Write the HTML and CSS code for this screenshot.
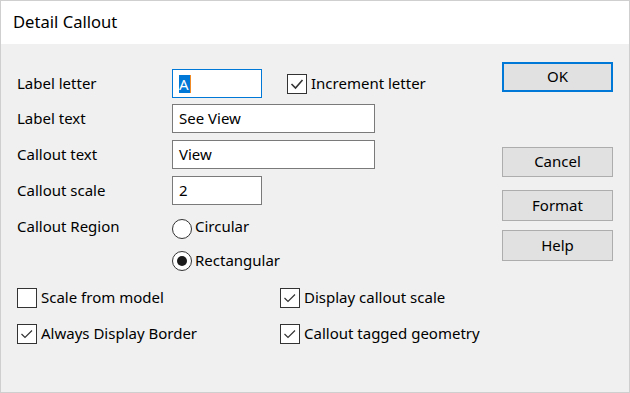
FILE: index.html
```html
<!DOCTYPE html>
<html>
<head>
<meta charset="utf-8">
<link rel="stylesheet" href="styles.css">
</head>
<body>
<div class="window">
  <div class="titlebar">Detail Callout</div>
  <div class="content">
    <div class="form">
      <div class="row r1">
        <span class="label">Label letter</span>
        <div class="input short focused"><span class="sel">A</span></div>
        <label class="check inc">
          <span class="box"><svg viewBox="0 0 18 18" width="18" height="18"><polyline points="3.5,9 7.5,13 14.5,5" /></svg></span>
          <span class="txt">Increment letter</span>
        </label>
      </div>
      <div class="row r2">
        <span class="label">Label text</span>
        <div class="input long"><span class="txt">See View</span></div>
      </div>
      <div class="row r3">
        <span class="label">Callout text</span>
        <div class="input long"><span class="txt">View</span></div>
      </div>
      <div class="row r4">
        <span class="label">Callout scale</span>
        <div class="input short"><span class="txt">2</span></div>
      </div>
      <div class="row r5">
        <span class="label up">Callout Region</span>
        <label class="radio"><span class="circle"></span><span class="txt up">Circular</span></label>
      </div>
      <div class="row r6">
        <span class="label"></span>
        <label class="radio"><span class="circle on"></span><span class="txt">Rectangular</span></label>
      </div>
      <div class="pairs">
        <label class="check small"><span class="box"></span><span class="txt">Scale from model</span></label>
        <label class="check small"><span class="box"><svg viewBox="0 0 18 18" width="18" height="18"><polyline points="3.5,9 7,12.5 14,5.5" /></svg></span><span class="txt">Display callout scale</span></label>
        <label class="check small"><span class="box"><svg viewBox="0 0 18 18" width="18" height="18"><polyline points="3.5,9 7,12.5 14,5.5" /></svg></span><span class="txt">Always Display Border</span></label>
        <label class="check small"><span class="box"><svg viewBox="0 0 18 18" width="18" height="18"><polyline points="3.5,9 7,12.5 14,5.5" /></svg></span><span class="txt">Callout tagged geometry</span></label>
      </div>
    </div>
    <div class="buttons">
      <button class="btn ok">OK</button>
      <button class="btn cancel">Cancel</button>
      <button class="btn format">Format</button>
      <button class="btn help">Help</button>
    </div>
  </div>
</div>
</body>
</html>
```
FILE: styles.css
```css
html, body {
  margin: 0;
  padding: 0;
  background: #f0f0f0;
}
body {
  font-family: "Noto Sans", "Open Sans", sans-serif;
  font-size: 15px;
  color: #000;
}
.window {
  width: 630px;
  height: 393px;
  box-sizing: border-box;
  border: 1px solid #cfcfcf;
  background: #f0f0f0;
  display: flex;
  flex-direction: column;
}
.titlebar {
  height: 43px;
  background: #fff;
  box-sizing: border-box;
  padding-left: 12px;
  padding-bottom: 2px;
  display: flex;
  align-items: center;
  font-size: 16.6px;
}
.content {
  display: flex;
  flex: 1;
}
.form {
  width: 484px;
  padding-left: 16px;
  padding-top: 25px;
  box-sizing: border-box;
}
.row {
  display: flex;
  align-items: center;
  height: 29px;
}
.r2 { margin-top: 6px; }
.r3 { margin-top: 7px; }
.r4 { margin-top: 7px; }
.r5 { margin-top: 9px; }
.r6 { margin-top: 3px; }
.label, .txt {
  position: relative;
  top: -1px;
}
.label.up, .txt.up { top: -3px; }
.label {
  width: 155px;
  flex: none;
}
.input {
  height: 29px;
  box-sizing: border-box;
  border: 1px solid #7a7a7a;
  background: #fff;
  padding-left: 6px;
  display: flex;
  align-items: center;
}
.input.short { width: 90px; }
.input.long { width: 203px; }
.input.focused { border-color: #0078d7; }
.sel {
  background: #0078d7;
  color: #fff;
  border-right: 1px solid #f08a24;
  line-height: 18px;
  padding: 0 1px 0 0;
}
.check {
  display: flex;
  align-items: center;
  gap: 4px;
}
.check.inc { margin-left: 25px; }
.box {
  width: 20px;
  height: 20px;
  box-sizing: border-box;
  border: 1px solid #333;
  background: #fff;
  display: flex;
  align-items: center;
  justify-content: center;
  flex: none;
}
.box svg polyline {
  fill: none;
  stroke: #333;
  stroke-width: 1.6;
}
.check.small .box svg polyline { stroke-width: 1.2; }
.radio {
  display: flex;
  align-items: center;
  gap: 3px;
}
.circle {
  width: 20px;
  height: 20px;
  box-sizing: border-box;
  border: 1px solid #333;
  border-radius: 50%;
  background: #fff;
  display: flex;
  align-items: center;
  justify-content: center;
}
.circle.on::after {
  content: "";
  width: 10px;
  height: 10px;
  border-radius: 50%;
  background: #1a1a1a;
}
.pairs {
  margin-top: 9px;
  display: grid;
  grid-template-columns: 263px auto;
  grid-auto-rows: 28px;
  row-gap: 8px;
}
.buttons {
  display: flex;
  flex-direction: column;
  padding-top: 18px;
  padding-left: 17px;
}
.btn {
  width: 111px;
  height: 30px;
  box-sizing: border-box;
  border: 1px solid #adadad;
  background: #e1e1e1;
  font-family: inherit;
  font-size: 15px;
  color: #000;
  padding: 0 0 2px 0;
}
.btn.ok { border: 2px solid #0078d7; }
.btn.cancel { margin-top: 55px; }
.btn.format { margin-top: 13px; height: 31px; }
.btn.help { margin-top: 9px; height: 31px; }
```
